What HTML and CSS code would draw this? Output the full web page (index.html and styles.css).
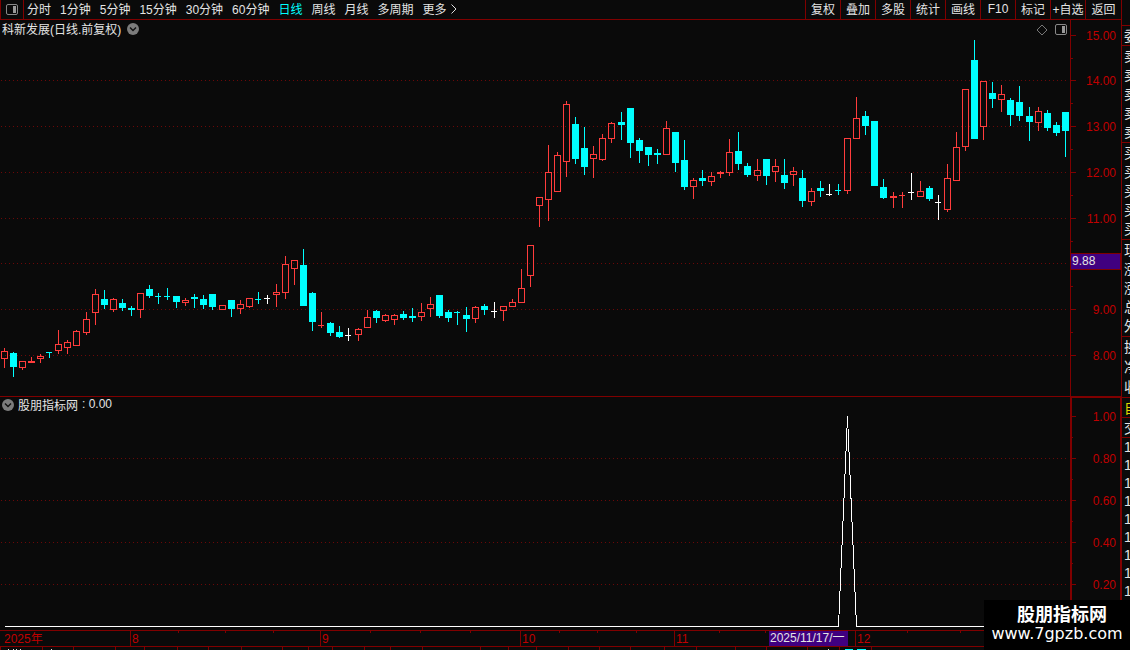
FILE: index.html
```
<!DOCTYPE html>
<html lang="zh">
<head>
    <meta charset="UTF-8">
    <meta name="viewport" content="width=device-width, initial-scale=1.0">
    <title>科新发展</title>
    <link rel="stylesheet" href="styles.css">
</head>
<body>
    <div class="terminal">
        <div class="toolbar">
            <button class="layout-btn" aria-label="布局">
                <svg width="12" height="11" viewBox="0 0 12 11"><rect x="0.5" y="0.5" width="11" height="10" rx="1.5" fill="none" stroke="#888"/><rect x="7" y="2" width="3" height="7" fill="#999"/></svg>
            </button>
            <div class="periods">
                <button>分时</button>
                <button>1分钟</button>
                <button>5分钟</button>
                <button>15分钟</button>
                <button>30分钟</button>
                <button>60分钟</button>
                <button class="active">日线</button>
                <button>周线</button>
                <button>月线</button>
                <button>多周期</button>
                <button class="more">更多
                    <svg width="6" height="10" viewBox="0 0 6 10"><path d="M0.5 0.5L5 5L0.5 9.5" fill="none" stroke="#ddd"/></svg>
                </button>
            </div>
            <div class="tools">
                <button>复权</button>
                <button>叠加</button>
                <button>多股</button>
                <button>统计</button>
                <button>画线</button>
                <button>F10</button>
                <button>标记</button>
                <button>+自选</button>
                <button>返回</button>
            </div>
        </div>

        <div class="panel price-panel">
            <div class="plot">
                <div class="caption">
                    <span>科新发展(日线.前复权)</span>
                    <svg width="12" height="12" viewBox="0 0 12 12"><circle cx="6" cy="6" r="6" fill="#7c7c7c"/><path d="M3 4.5L6 7.5L9 4.5" fill="none" stroke="#111" stroke-width="1.4"/></svg>
                </div>
                <div class="corner">
                    <svg width="12" height="12" viewBox="0 0 12 12"><path d="M6 1L11 6L6 11L1 6Z" fill="none" stroke="#777"/></svg>
                    <svg width="12" height="12" viewBox="0 0 12 12"><rect x="0.5" y="0.5" width="11" height="10" rx="1.5" fill="none" stroke="#888"/><rect x="7" y="2" width="3" height="7" fill="#999"/></svg>
                </div>
                <svg class="canvas" id="priceChart"></svg>
            </div>
            <svg class="axis" id="priceAxis"></svg>
        </div>

        <div class="panel signal-panel">
            <div class="plot">
                <div class="caption">
                    <svg width="12" height="12" viewBox="0 0 12 12"><circle cx="6" cy="6" r="6" fill="#7c7c7c"/><path d="M3 4.5L6 7.5L9 4.5" fill="none" stroke="#111" stroke-width="1.4"/></svg>
                    <span>股朋指标网</span>
                    <span>: 0.00</span>
                </div>
                <svg class="canvas" id="signalChart"></svg>
            </div>
            <svg class="axis" id="signalAxis"></svg>
        </div>

        <svg class="dates" id="dateAxis"></svg>
        <svg class="strip" id="strip"></svg>
    </div>

    <div class="side">
        <div class="group one"><span>委</span></div>
        <div class="group five"><span>卖</span><span>卖</span><span>卖</span><span>卖</span><span>卖</span></div>
        <div class="group five"><span>买</span><span>买</span><span>买</span><span>买</span><span>买</span></div>
        <div class="group five"><span>现</span><span>涨</span><span>涨</span><span>总</span><span>外</span></div>
        <div class="group three"><span>换</span><span>净</span><span>收</span></div>
        <div class="group one tab"><span>自</span></div>
        <div class="group one"><span>交</span></div>
        <div class="group ticks"><span>1</span><span>1</span><span>1</span><span>1</span><span>1</span><span>1</span><span>1</span><span>1</span><span>1</span></div>
    </div>

    <div class="watermark">
        <strong>股朋指标网</strong>
        <span>www.7gpzb.com</span>
    </div>

    <script src="chart.js"></script>
</body>
</html>
```
FILE: styles.css
```
* {
    box-sizing: border-box;
}
body {
    margin: 0;
    height: 100vh;
    display: flex;
    overflow: hidden;
    background-color: #0a0a0a;
    color: #e4e4e4;
    font-family: "Liberation Sans", "Noto Sans CJK SC", sans-serif;
    font-size: 12px;
}
button {
    margin: 0;
    padding: 0;
    border: none;
    background: none;
    color: inherit;
    font: inherit;
    cursor: pointer;
    white-space: nowrap;
}
button:hover {
    color: #00ffff;
}
svg {
    display: block;
    flex-shrink: 0;
}
.terminal {
    flex: 1;
    min-width: 0;
    display: flex;
    flex-direction: column;
}

/* toolbar */
.toolbar {
    display: flex;
    height: 20px;
    flex-shrink: 0;
    border-bottom: 1px solid #800000;
}
.layout-btn {
    width: 24px;
    display: flex;
    align-items: center;
    justify-content: center;
    border-left: 1px solid #800000;
    border-right: 1px solid #800000;
}
.periods {
    flex: 1;
    display: flex;
    gap: 9px;
    padding-left: 3px;
}
.periods button,
.tools button {
    padding-bottom: 2px;
}
.periods .active {
    color: #00ffff;
}
.more {
    display: flex;
    align-items: center;
    gap: 4px;
}
.tools {
    display: flex;
}
.tools button {
    width: 35px;
    border-left: 1px solid #800000;
}
.tools button:last-child {
    width: 36px;
}

/* chart panels */
.panel {
    display: flex;
    min-height: 0;
}
.price-panel {
    flex: 376;
}
.signal-panel {
    flex: 233;
    border-top: 1px solid #800000;
}
.plot {
    position: relative;
    flex: 1;
    min-width: 0;
}
.canvas {
    width: 100%;
    height: 100%;
}
.axis {
    width: 51px;
    height: 100%;
    border-left: 1px solid #800000;
}
.signal-panel .axis {
    border: 2px solid #800000;
    border-width: 1px 1px 0 2px;
}
.caption {
    position: absolute;
    top: 0;
    left: 2px;
    height: 18px;
    display: flex;
    align-items: center;
    gap: 6px;
}
.caption span {
    padding-bottom: 2px;
}
.signal-panel .caption {
    height: 16px;
    gap: 4px;
}
.corner {
    position: absolute;
    top: 4px;
    right: 3px;
    display: flex;
    gap: 7px;
}
.dates {
    width: 100%;
    height: 17px;
    border-top: 1px solid #800000;
    border-bottom: 1px solid #800000;
}
.strip {
    width: 100%;
    height: 3px;
}

/* clipped quote column */
.side {
    width: 9px;
    flex-shrink: 0;
    padding-top: 25px;
    overflow: hidden;
    border-left: 1px solid #800000;
    font-size: 14px;
}
.group {
    display: flex;
    flex-direction: column;
    padding-left: 2px;
    border-top: 1px solid #800000;
}
.group span {
    flex: 1;
    display: flex;
    align-items: center;
    line-height: 18px;
}
.one {
    height: 20px;
}
.three {
    height: 61px;
}
.five {
    height: 97px;
}
.tab {
    color: #e0d800;
}

.watermark {
    position: absolute;
    right: 0;
    bottom: 0;
    width: 146px;
    height: 50px;
    display: flex;
    flex-direction: column;
    align-items: center;
    padding-top: 5px;
    background-color: #000;
    color: #fff;
}
.watermark strong {
    padding-left: 10px;
    font-size: 18px;
    line-height: 20px;
}
.watermark span {
    font-family: "DejaVu Sans", sans-serif;
    font-size: 16px;
    line-height: 18px;
}
```
FILE: chart.js
```
const RED = "#ff3c3c", CYAN = "#00ffff", WHITE = "#ffffff", LINE = "#800000", LABEL = "#c00000";
const BASE_W = 1070;

// type, x, high, body top, body bottom, low
const candles = [
    ["r", 4, 348, 351, 359, 368], ["c", 13, 352, 353, 367, 377], ["r", 22, 361, 361, 368, 370],
    ["r", 31, 357, 361, 363, 363], ["r", 40, 354, 356, 359, 363], ["c", 49, 352, 352, 353, 358],
    ["r", 58, 330, 344, 351, 354], ["r", 67, 340, 342, 348, 354], ["r", 76, 330, 331, 346, 346],
    ["r", 86, 312, 319, 333, 335], ["r", 95, 289, 294, 313, 325], ["c", 104, 290, 299, 305, 309],
    ["r", 113, 298, 299, 310, 312], ["c", 122, 299, 303, 308, 311], ["c", 131, 306, 308, 310, 316],
    ["r", 140, 293, 293, 310, 318], ["c", 149, 285, 289, 296, 298], ["c", 158, 293, 296, 297, 304],
    ["c", 167, 288, 296, 297, 300], ["c", 176, 296, 296, 302, 308], ["r", 185, 298, 300, 303, 306],
    ["c", 194, 294, 297, 299, 308], ["c", 203, 295, 299, 305, 309], ["c", 212, 294, 294, 307, 310],
    ["r", 222, 305, 305, 310, 310], ["c", 231, 300, 300, 309, 317], ["r", 240, 300, 304, 309, 314],
    ["r", 249, 298, 298, 307, 308], ["c", 258, 292, 299, 300, 304], ["w", 267, 295, 298, 299, 304],
    ["r", 276, 284, 292, 295, 307], ["r", 285, 256, 264, 293, 299], ["r", 294, 260, 260, 269, 285],
    ["c", 303, 249, 265, 306, 306], ["c", 312, 292, 293, 322, 331], ["r", 321, 312, 325, 326, 328],
    ["c", 330, 322, 323, 333, 336], ["c", 339, 326, 332, 337, 338], ["w", 348, 328, 335, 336, 341],
    ["r", 358, 328, 329, 335, 341], ["r", 367, 310, 317, 328, 328], ["c", 376, 310, 311, 318, 323],
    ["r", 385, 314, 315, 321, 322], ["r", 394, 314, 315, 320, 325], ["c", 403, 311, 314, 318, 320],
    ["c", 412, 308, 316, 318, 322], ["r", 421, 303, 312, 317, 321], ["r", 430, 297, 304, 309, 317],
    ["c", 439, 295, 295, 316, 318], ["c", 448, 310, 312, 318, 322], ["c", 457, 311, 312, 313, 325],
    ["c", 466, 307, 315, 319, 332], ["r", 475, 306, 307, 319, 323], ["c", 484, 304, 306, 310, 315],
    ["w", 494, 302, 311, 312, 318], ["r", 503, 306, 306, 311, 321], ["r", 512, 299, 302, 307, 307],
    ["r", 521, 269, 288, 303, 303], ["r", 530, 245, 245, 276, 287], ["r", 539, 197, 197, 206, 227],
    ["r", 548, 145, 172, 200, 221], ["r", 557, 152, 155, 192, 192], ["r", 566, 101, 104, 162, 177],
    ["c", 575, 117, 124, 159, 164], ["c", 584, 127, 148, 167, 175], ["r", 593, 146, 154, 159, 178],
    ["r", 602, 134, 138, 160, 161], ["r", 611, 122, 123, 139, 143], ["c", 621, 112, 122, 125, 140],
    ["c", 630, 108, 108, 143, 158], ["c", 639, 138, 140, 151, 163], ["c", 648, 147, 147, 155, 166],
    ["c", 657, 149, 153, 155, 164], ["r", 666, 121, 128, 155, 155], ["c", 675, 132, 132, 163, 172],
    ["c", 684, 140, 160, 187, 190], ["r", 693, 178, 180, 187, 199], ["c", 702, 170, 178, 181, 186],
    ["r", 711, 172, 176, 182, 186], ["r", 720, 171, 172, 174, 178], ["r", 729, 139, 152, 173, 176],
    ["c", 738, 132, 151, 164, 170], ["c", 747, 163, 166, 175, 177], ["r", 757, 159, 170, 176, 181],
    ["c", 766, 159, 159, 176, 185], ["r", 775, 159, 166, 172, 182], ["c", 784, 159, 175, 183, 189],
    ["r", 793, 167, 171, 175, 186], ["c", 802, 170, 178, 201, 207], ["r", 811, 188, 191, 202, 206],
    ["c", 820, 181, 188, 191, 197], ["w", 829, 184, 194, 195, 196], ["c", 838, 184, 190, 191, 195],
    ["r", 847, 138, 138, 191, 194], ["r", 856, 97, 118, 139, 139], ["c", 865, 111, 116, 126, 135],
    ["c", 874, 121, 121, 186, 186], ["c", 883, 179, 187, 198, 199], ["r", 893, 192, 196, 198, 208],
    ["r", 902, 192, 195, 196, 208], ["w", 911, 173, 192, 193, 200], ["r", 920, 181, 191, 197, 197],
    ["c", 929, 186, 188, 199, 201], ["w", 938, 195, 202, 203, 220], ["r", 947, 164, 178, 210, 212],
    ["r", 956, 132, 147, 181, 181], ["r", 965, 89, 89, 147, 151], ["c", 974, 40, 60, 139, 139],
    ["r", 983, 81, 81, 127, 140], ["c", 992, 82, 93, 99, 108], ["r", 1001, 85, 94, 100, 112],
    ["c", 1010, 98, 100, 115, 126], ["c", 1019, 86, 102, 116, 121], ["c", 1029, 107, 116, 122, 141],
    ["r", 1038, 107, 111, 123, 131], ["c", 1047, 110, 113, 128, 131], ["c", 1056, 122, 125, 133, 136],
    ["c", 1065, 112, 112, 131, 157]
];
const PRICE_TOP = 20, PRICE_H = 376;
const SIGNAL_TOP = 397, SIGNAL_H = 233;
const prices = [["15.00", 35], ["14.00", 80], ["13.00", 126], ["12.00", 172], ["11.00", 218], ["", 263], ["9.00", 309], ["8.00", 355]];
const levels = [["1.00", 416], ["0.80", 458], ["0.60", 500], ["0.40", 542], ["0.20", 584]];
const months = [["2025年", 2], ["8", 130], ["9", 320], ["10", 520], ["11", 674], ["12", 855]];
const weekTicks = [178, 225, 273, 370, 420, 470, 559, 597, 636, 719, 765, 907, 960];
const stripTicks = [0, 42, 73, 115, 144, 177, 208, 241, 282, 308, 332, 364, 390, 422, 480, 508, 536, 568, 599, 630, 664, 696, 735, 766, 807, 839, 871];

function add(svg, name, attrs, text) {
    const node = document.createElementNS("http://www.w3.org/2000/svg", name);
    for (const key in attrs) node.setAttribute(key, attrs[key]);
    if (text) node.textContent = text;
    svg.appendChild(node);
    return node;
}
function rect(svg, x, y, width, height, fill) {
    add(svg, "rect", { x, y, width, height, fill });
}
function clear(id) {
    const svg = document.getElementById(id);
    svg.replaceChildren();
    return svg;
}
function gridLine(svg, y, width) {
    add(svg, "path", { d: `M1 ${y + 0.5}H${width - 2}`, stroke: "#6c0808", "stroke-dasharray": "1 3" });
}

function drawPrice() {
    const svg = clear("priceChart");
    const w = svg.clientWidth, h = svg.clientHeight;
    const px = x => Math.round(x * w / BASE_W);
    const py = y => Math.round((y - PRICE_TOP) * h / PRICE_H);
    for (const [, y] of prices.slice(1)) gridLine(svg, py(y), w);
    for (const [type, cx, high, top, bottom, low] of candles) {
        const x = px(cx), t = py(top), b = py(bottom);
        const color = { r: RED, c: CYAN, w: WHITE }[type];
        if (type === "r" && bottom - top > 2) {
            rect(svg, x, py(high), 1, t - py(high), color);
            rect(svg, x, b, 1, py(low) - b, color);
            add(svg, "rect", { x: x - 2.5, y: t + 0.5, width: 6, height: b - t - 1, fill: "none", stroke: color });
        } else {
            rect(svg, x, py(high), 1, py(low) - py(high), color);
            const narrow = bottom - top === 1;
            rect(svg, x - 3, t, narrow ? 6 : 7, b - t, color);
        }
    }

    const axis = clear("priceAxis");
    prices.forEach(([label, y], i) => {
        rect(axis, 0, py(y), 5, 1, LINE);
        if (i < prices.length - 1) rect(axis, 0, py(y + 23), 2, 1, LINE);
        if (label) add(axis, "text", { x: 45, y: py(y) + 5, "text-anchor": "end", fill: LABEL }, label);
    });
    rect(axis, 0, py(253), 50, 17, LINE);
    rect(axis, 0, py(254), 49, 15, "#400080");
    add(axis, "text", { x: 1, y: py(265), fill: "#e4e4e4" }, "9.88");
}

function drawSignal() {
    const svg = clear("signalChart");
    const w = svg.clientWidth, h = svg.clientHeight;
    const px = x => Math.round(x * w / BASE_W);
    const py = y => Math.round((y - SIGNAL_TOP) * h / SIGNAL_H);
    for (const [, y] of levels.slice(1)) gridLine(svg, py(y), w);
    add(svg, "polyline", {
        points: [[4, 626], [838, 626], [847, 416], [856, 626], [1066, 626]].map(p => (px(p[0]) + 0.5) + "," + (py(p[1]) + 0.5)).join(" "),
        fill: "none", stroke: WHITE, "shape-rendering": "crispEdges"
    });
    const axis = clear("signalAxis");
    for (const [label, y] of levels) {
        rect(axis, 0, py(y) - 1, 4, 1, LINE);
        rect(axis, 0, py(y + 21) - 1, 1, 1, LINE);
        add(axis, "text", { x: 44, y: py(y) + 4, "text-anchor": "end", fill: LABEL }, label);
    }
}

function drawDates() {
    const svg = clear("dateAxis");
    const w = svg.clientWidth;
    const px = x => Math.round(x * w / 1121);
    for (const x of weekTicks) rect(svg, px(x), 0, 1, 2, LINE);
    months.forEach(([label, x], i) => {
        if (i) rect(svg, px(x), 0, 1, 15, LINE);
        add(svg, "text", { x: px(x) + 2, y: 12, fill: LABEL }, label);
    });
    rect(svg, px(769), 0, 79, 15, "#400080");
    add(svg, "text", { x: px(770), y: 11, fill: "#e4e4e4" }, "2025/11/17/一");

    const strip = clear("strip");
    for (const x of stripTicks) rect(strip, px(x), 0, 1, 3, LINE);
    for (const x of [8, 13, 16, 20, 51, 828]) rect(strip, px(x), 2, 1, 1, "#ddd");
    rect(strip, px(845), 2, 8, 1, CYAN);
    rect(strip, px(857), 2, 9, 1, CYAN);
}

function draw() {
    drawPrice();
    drawSignal();
    drawDates();
}
window.addEventListener("resize", draw);
draw();
```
